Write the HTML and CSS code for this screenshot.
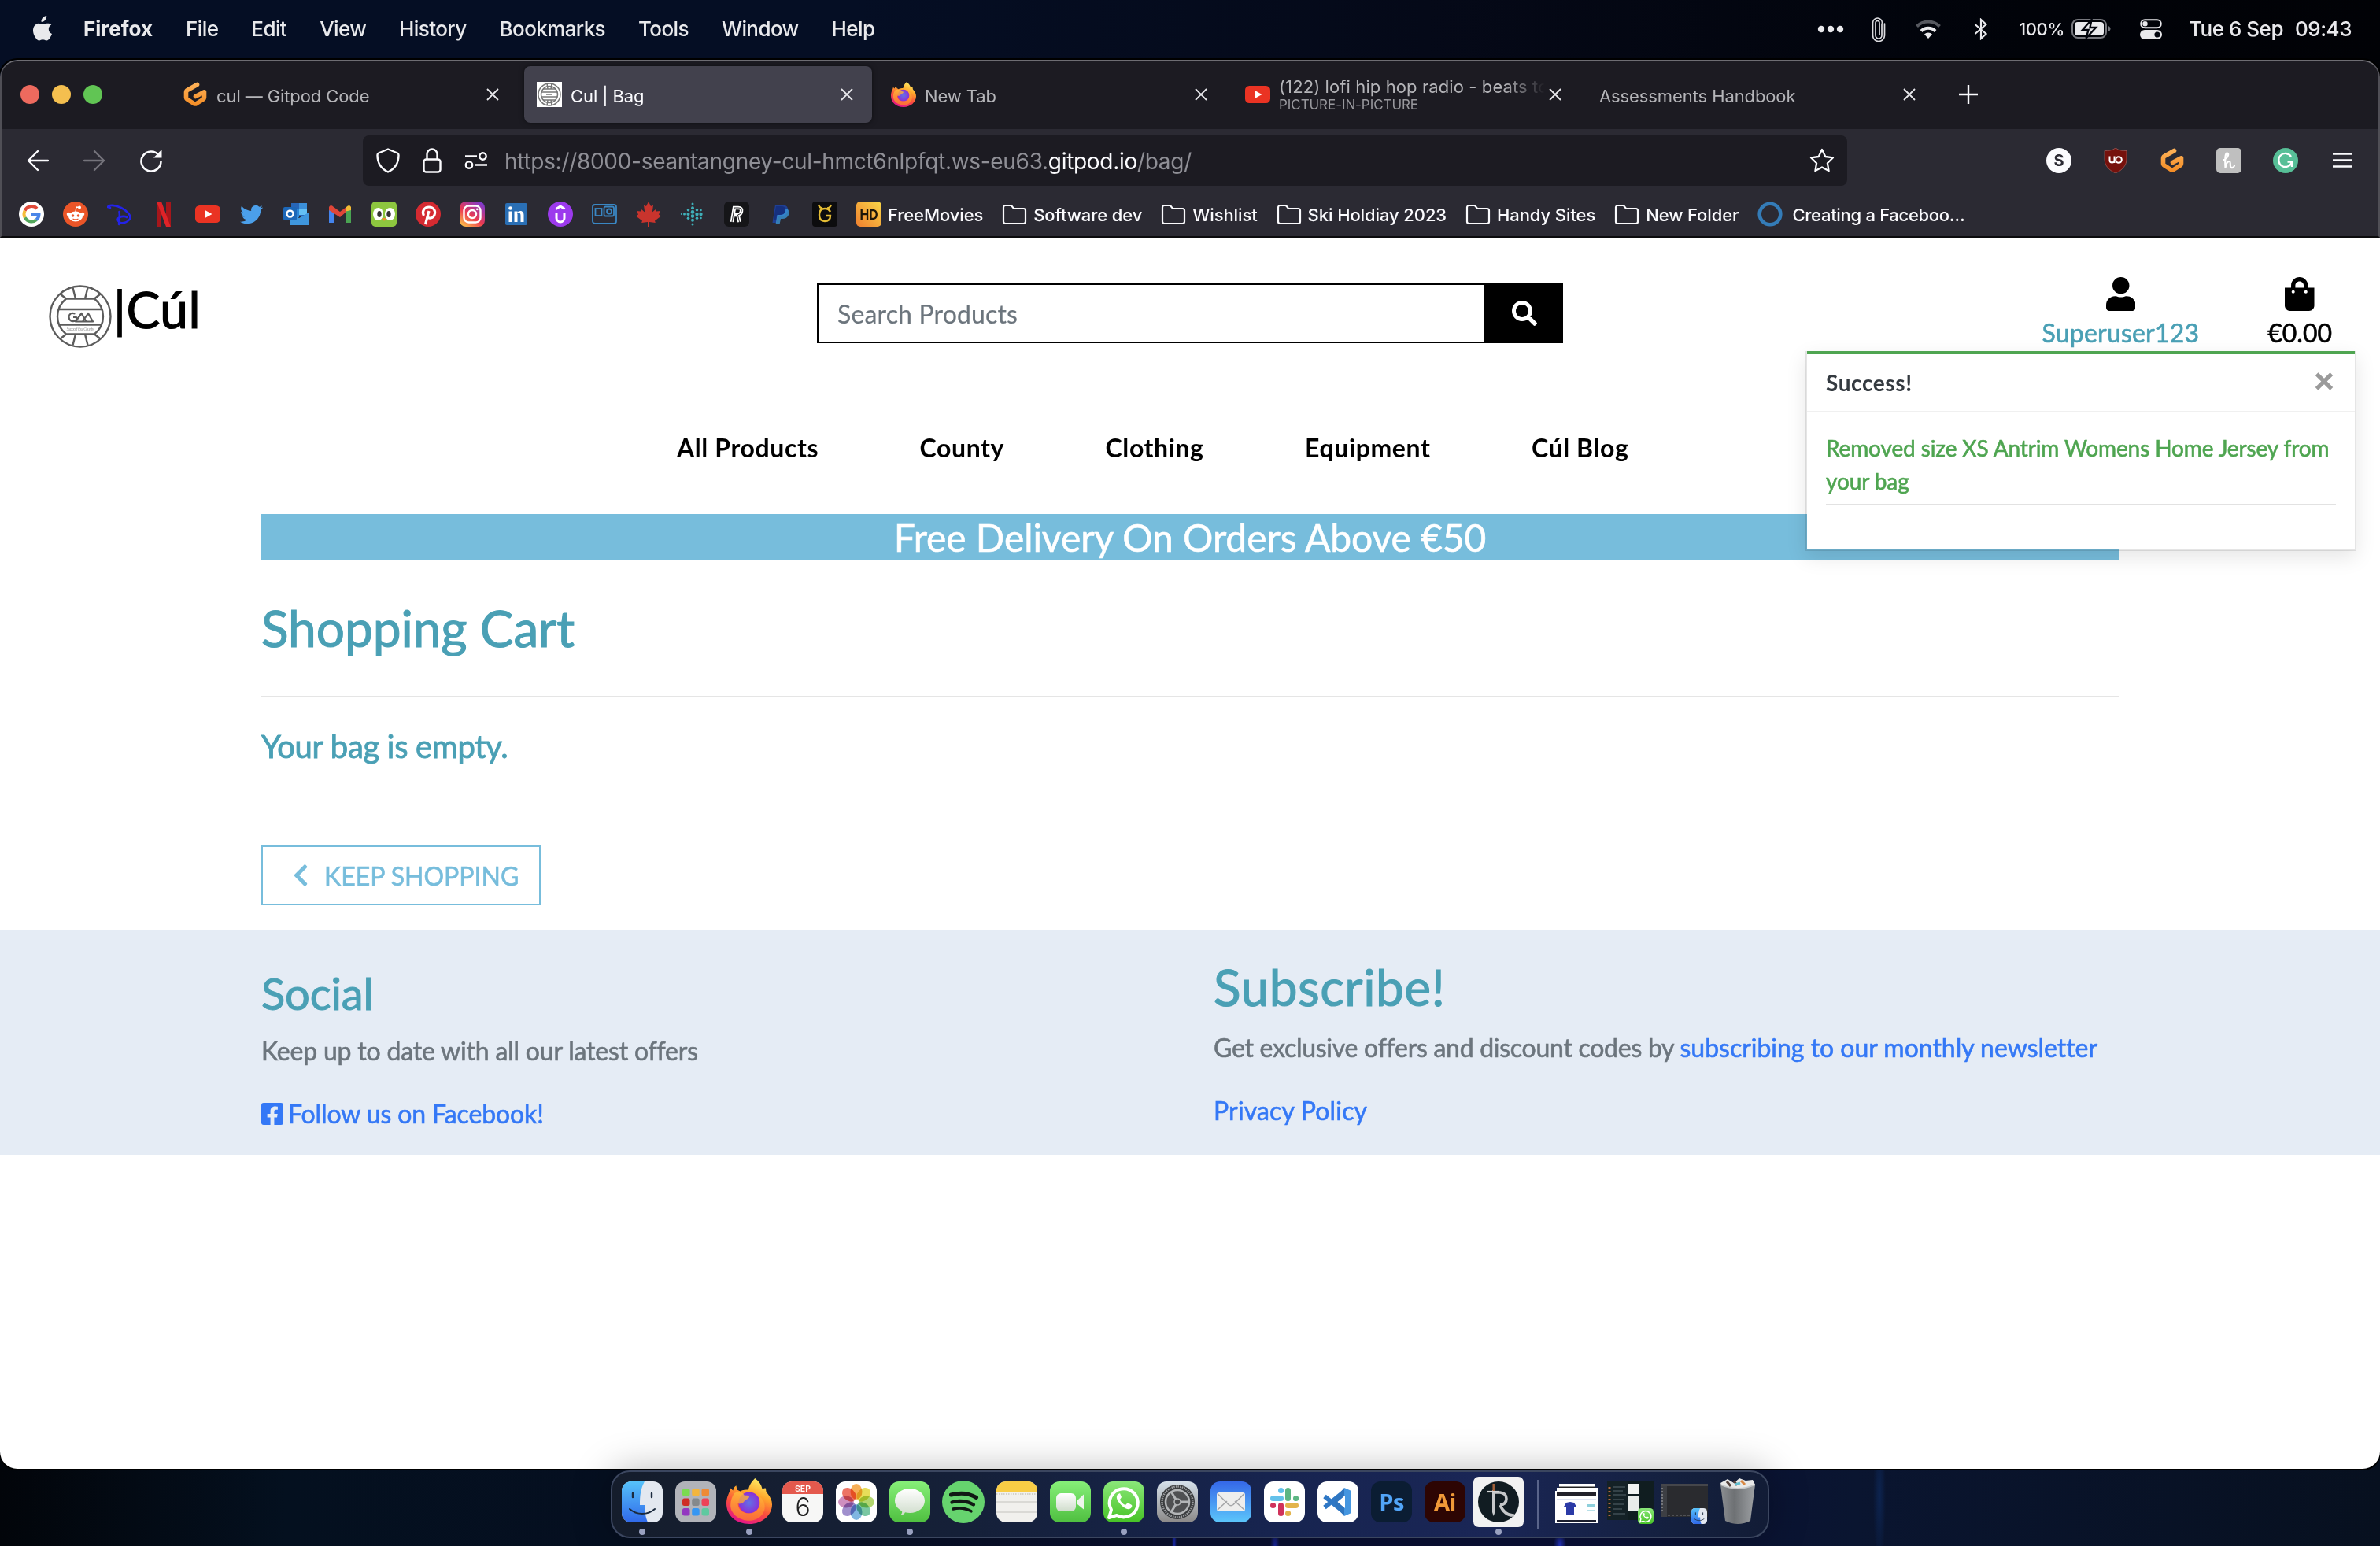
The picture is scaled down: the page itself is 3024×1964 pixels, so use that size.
FILE: index.html
```html
<!DOCTYPE html>
<html lang="en">
<head>
<meta charset="utf-8">
<title>Cul | Bag</title>
<link rel="stylesheet" href="styles.css">
</head>
<body>
<svg class="defs" width="0" height="0" aria-hidden="true">
  <defs>
    <linearGradient id="g-orange" gradientUnits="userSpaceOnUse" x1="0" y1="0" x2="0" y2="32"><stop offset="0" stop-color="#ffb45b"/><stop offset="1" stop-color="#f28a22"/></linearGradient>
    <linearGradient id="g-flame" x1=".75" y1="0" x2=".35" y2="1"><stop offset="0" stop-color="#fff36a"/><stop offset=".35" stop-color="#ffa72b"/><stop offset=".65" stop-color="#fb4d3d"/><stop offset="1" stop-color="#e2158a"/></linearGradient>
    <linearGradient id="g-fox" x1="0" y1="0" x2="0" y2="1"><stop offset="0" stop-color="#ffbd3b"/><stop offset="1" stop-color="#ff7a2d"/></linearGradient>
    <radialGradient id="g-globe"><stop offset="0" stop-color="#6173e6"/><stop offset="1" stop-color="#8b2fd6"/></radialGradient>
    <linearGradient id="g-green" x1="0" y1="0" x2="0" y2="1"><stop offset="0" stop-color="#86ef78"/><stop offset="1" stop-color="#4fbf40"/></linearGradient>
    <linearGradient id="g-wa" x1="0" y1="0" x2="0" y2="1"><stop offset="0" stop-color="#8ae779"/><stop offset="1" stop-color="#47c326"/></linearGradient>
    <linearGradient id="g-blue" x1="0" y1="0" x2="0" y2="1"><stop offset="0" stop-color="#56c2fa"/><stop offset="1" stop-color="#3069ea"/></linearGradient>
    <linearGradient id="g-mail" x1="0" y1="0" x2="0" y2="1"><stop offset="0" stop-color="#3568e8"/><stop offset="1" stop-color="#5cc6fb"/></linearGradient>
    <linearGradient id="g-paper" x1="0" y1="0" x2="0" y2="1"><stop offset="0" stop-color="#ffffff"/><stop offset="1" stop-color="#cfdccb"/></linearGradient>
    <linearGradient id="g-gear" x1="0" y1="0" x2="0" y2="1"><stop offset="0" stop-color="#d5e0ea"/><stop offset="1" stop-color="#8b8988"/></linearGradient>
    <linearGradient id="g-trash" x1="0" y1="0" x2="1" y2="0"><stop offset="0" stop-color="#8b8e92"/><stop offset=".4" stop-color="#6e7174"/><stop offset="1" stop-color="#9ea1a4"/></linearGradient>
    <linearGradient id="g-insta" x1=".1" y1="1" x2=".8" y2="0"><stop offset="0" stop-color="#fdc84a"/><stop offset=".45" stop-color="#ec3a50"/><stop offset="1" stop-color="#7d3ad0"/></linearGradient>
    <linearGradient id="g-hd" x1="0" y1="1" x2="1" y2="0"><stop offset="0" stop-color="#ef7f2f"/><stop offset="1" stop-color="#f9d748"/></linearGradient>
  </defs>
  <symbol id="i-close" viewBox="0 0 16 16"><path d="M1 1l14 14M15 1L1 15" fill="none" stroke="#e8e8ec" stroke-width="1.8"/></symbol>
  <symbol id="i-gitpod" viewBox="0 0 32 32"><path d="M18.500 3.500L6.500 10.300Q4.500 11.400 4.500 13.500V19.500Q4.500 21.300 6.200 22.300L14.300 27.500Q16 28.500 17.700 27.500L25.800 22.300Q27.500 21.300 27.500 19.500V12.800L16.500 18.500" fill="none" stroke="url(#g-orange)" stroke-width="5.600" stroke-linecap="round" stroke-linejoin="round"/></symbol>
  <symbol id="i-youtube" viewBox="0 0 32 32"><rect y="5" width="32" height="22" rx="5.500" fill="#ea3323"/><path d="M12.500 11v10l9-5z" fill="#fff"/></symbol>
  <symbol id="i-firefox" viewBox="0 0 56 56"><path d="M35 0c5 4 8 8 9 13 2-1 3-1 4-1 1 3 0 4 2 6 4 5 6 9 6 14 0 13-12 24-28 24S0 46 0 31c0-9 4-13 5-19l3 3c1-3 2-5 4-6l1 5 4 2c3-2 7-2 10-2 1-5 3-9 8-14z" fill="url(#g-flame)"/><circle cx="28" cy="30" r="13" fill="url(#g-globe)"/><path d="M10 18c5-2 10-1 12 3 3 0 6 0 6 2-1 3-5 3-6 5s-4 4-8 3c0 7 6 12 13 12 9 0 14-6 14-13 0-4-1-7-3-9 5 2 9 7 9 14 0 10-9 17-19 17S5 45 5 33c0-6 2-11 5-15z" fill="url(#g-fox)" opacity=".8"/></symbol>
  <symbol id="i-folder" viewBox="0 0 32 32"><path d="M2 7.500A2.500 2.500 0 0 1 4.500 5h6.200a2.500 2.500 0 0 1 2 .9L15 9h12.500A2.500 2.500 0 0 1 30 11.500v14a2.500 2.500 0 0 1-2.500 2.500h-23A2.500 2.500 0 0 1 2 25.500z" fill="none" stroke="#fbfbfe" stroke-width="2.200"/></symbol>
  <symbol id="i-finder" viewBox="0 0 52 52"><rect width="52" height="52" rx="12" fill="#e3e8f0"/><path d="M12 0h17c-5 9-6 18-6 30h6c0 8 1 15 4 22H12A12 12 0 0 1 0 40V12A12 12 0 0 1 12 0z" fill="url(#g-blue)"/><path d="M14 15v5M38 15v5" stroke="#1c2b3f" stroke-width="2.400" stroke-linecap="round"/><path d="M10 35c9 8 23 8 32 0" fill="none" stroke="#1c2b3f" stroke-width="2" stroke-linecap="round"/></symbol>
  <symbol id="i-whatsapp" viewBox="0 0 52 52"><rect width="52" height="52" rx="12" fill="url(#g-wa)"/><path d="M7 46l3-10a18 18 0 1 1 7 7z" fill="none" stroke="#fff" stroke-width="4" stroke-linejoin="round"/><path d="M19 16c-3 2-3 6 1 11s9 9 13 8c3-1 4-4 3-5l-5-3-3 3c-3-1-6-4-7-7l2-3-2-5z" fill="#fff"/></symbol>
</svg>

<div class="desktop">
  <header class="menubar">
    <svg class="apple" viewBox="0 0 28 34"><path d="M19.200 1c.2 2.100-.6 4-1.800 5.400-1.200 1.500-3.100 2.500-4.900 2.400-.2-2 .7-4 1.900-5.300C15.600 2.100 17.600 1.100 19.200 1zM25.300 12.200c-2.300 1.400-3.500 3.300-3.500 5.800 0 2.900 1.600 5 4.200 6.100-.7 2-1.600 3.700-2.800 5.300-1.100 1.600-2.300 3-4.200 3-1.900 0-2.400-1.100-4.600-1.100s-2.900 1.100-4.600 1.100c-1.900 0-3.200-1.500-4.400-3.200C2.300 24.900.9 19.100 3 14.900c1.300-2.500 3.700-4.200 6.200-4.200 1.900 0 3.500 1.200 5.100 1.200 1.500 0 3.400-1.400 5.900-1.200 2 .1 3.900 0 5.100 1.500z" fill="#e9e9ec"/></svg>
    <strong class="app-name">Firefox</strong>
    <nav class="menus"><span>File</span><span>Edit</span><span>View</span><span>History</span><span>Bookmarks</span><span>Tools</span><span>Window</span><span>Help</span></nav>
    <div class="status">
      <svg class="st-dots" viewBox="0 0 34 10"><g fill="#e9e9ec"><circle cx="5" cy="5" r="4.200"/><circle cx="17" cy="5" r="4.200"/><circle cx="29" cy="5" r="4.200"/></g></svg>
      <svg class="st-clip" viewBox="0 0 18 32"><path d="M13 9v15a4 4 0 0 1-8 0V8a2.500 2.500 0 0 1 5 0v15M16.500 9v15a7.500 7.500 0 0 1-15 0V8a6 6 0 0 1 12 0" fill="none" stroke="#dcdce0" stroke-width="1.700" stroke-linecap="round"/></svg>
      <svg class="st-wifi" viewBox="0 0 34 26"><path d="M2.500 9.500a20.500 20.500 0 0 1 29 0" fill="none" stroke="#56585f" stroke-width="4"/><path d="M8 15.500a12.500 12.500 0 0 1 18 0" fill="none" stroke="#e9e9ec" stroke-width="4"/><path d="M17 25l-5-5.500a7.500 7.500 0 0 1 10 0z" fill="#e9e9ec"/></svg>
      <svg class="st-bt" viewBox="0 0 18 28"><path d="M1.500 8l14 12L9 26V2l6.500 6-14 12" fill="none" stroke="#e9e9ec" stroke-width="2.200"/></svg>
      <span class="pct">100%</span>
      <svg class="st-batt" viewBox="0 0 50 26"><rect x="1" y="1" width="43" height="23" rx="7" fill="none" stroke="#77787e" stroke-width="2"/><rect x="4" y="4" width="37" height="17" rx="4" fill="#e9e9ec"/><path d="M46.500 9v7q3-1 3-3.500T46.500 9z" fill="#77787e"/><path d="M25.500 1L14 14h7.500l-3 10.500L31 11h-7.500z" fill="#e9e9ec" stroke="#02050d" stroke-width="2.400"/></svg>
      <svg class="st-cc" viewBox="0 0 28 26"><rect x="1.200" y="1.200" width="25.600" height="10" rx="5" fill="none" stroke="#e9e9ec" stroke-width="2"/><circle cx="6.500" cy="6.200" r="3.200" fill="#e9e9ec"/><rect y="14" width="28" height="12" rx="6" fill="#e9e9ec"/><circle cx="22" cy="20" r="3.600" fill="#04070f"/></svg>
      <span class="date">Tue 6 Sep</span><span class="time">09:43</span>
    </div>
  </header>

  <main class="window">
    <section class="chrome">
      <div class="tabs">
        <div class="lights"><i class="red"></i><i class="yellow"></i><i class="green"></i></div>
        <div class="tab"><svg class="fav"><use href="#i-gitpod"/></svg><span class="title">cul — Gitpod Code</span><svg class="x"><use href="#i-close"/></svg></div>
        <div class="tab active"><svg class="fav" viewBox="0 0 32 32"><rect width="32" height="32" fill="#fff"/><g fill="none" stroke="#777" stroke-width="1.500"><circle cx="16" cy="16" r="14"/><circle cx="16" cy="16" r="10.500"/><path d="M8 9h16M5.500 13h21M5.500 19h21M8 23h16M13 2l1 7M19 2l-1 7M13 30l1-7M19 30l-1-7M12 16h8"/></g></svg><span class="title">Cul | Bag</span><svg class="x"><use href="#i-close"/></svg></div>
        <div class="tab"><svg class="fav"><use href="#i-firefox"/></svg><span class="title">New Tab</span><svg class="x"><use href="#i-close"/></svg></div>
        <div class="tab media"><svg class="fav"><use href="#i-youtube"/></svg><span class="title"><span class="fade">(122) lofi hip hop radio - beats to</span><small>PICTURE-IN-PICTURE</small></span><svg class="x"><use href="#i-close"/></svg></div>
        <div class="tab"><span class="title">Assessments Handbook</span><svg class="x"><use href="#i-close"/></svg></div>
        <svg class="plus" viewBox="0 0 24 24"><path d="M12 0v24M0 12h24" stroke="#fbfbfe" stroke-width="2.400"/></svg>
      </div>

      <div class="toolbar">
        <svg class="t-back" viewBox="0 0 28 28"><path d="M27 14H2M14 2L2 14l12 12" fill="none" stroke="#fbfbfe" stroke-width="2.400" stroke-linecap="round" stroke-linejoin="round"/></svg>
        <svg class="t-fwd" viewBox="0 0 28 28"><path d="M1 14h25M14 2l12 12-12 12" fill="none" stroke="#74737b" stroke-width="2.400" stroke-linecap="round" stroke-linejoin="round"/></svg>
        <svg class="t-reload" viewBox="0 0 28 28"><path d="M24 7.500A12.500 12.500 0 1 0 26.500 15" fill="none" stroke="#fbfbfe" stroke-width="2.600" stroke-linecap="round"/><path d="M27.500 0v10.500H17z" fill="#fbfbfe"/></svg>
        <div class="urlbar">
          <svg class="u-shield" viewBox="0 0 30 32"><path d="M15 1.500l12 5q1.500.7 1.500 2.500c0 9-4 17-13.500 21.500C5.500 26 1.500 18 1.500 9q0-1.800 1.500-2.500z" fill="none" stroke="#fbfbfe" stroke-width="2.400" stroke-linejoin="round"/></svg>
          <svg class="u-lock" viewBox="0 0 26 32"><rect x="2.500" y="14.500" width="21" height="16" rx="3" fill="none" stroke="#fbfbfe" stroke-width="2.400"/><path d="M6.500 14V8a6.500 6.500 0 0 1 13 0v6" fill="none" stroke="#fbfbfe" stroke-width="2.400"/></svg>
          <svg class="u-perm" viewBox="0 0 30 22"><g fill="none" stroke="#fbfbfe" stroke-width="2.400"><circle cx="23.500" cy="5.500" r="4.200"/><circle cx="6" cy="16.500" r="4.200"/><path d="M1 5.500h15M13 16.500h16"/></g></svg>
          <span class="url">https://8000-seantangney-cul-hmct6nlpfqt.ws-eu63.<b>gitpod.io</b>/bag/</span>
          <svg class="u-star" viewBox="0 0 32 32"><path d="M16 2l4.300 9 9.700 1.300-7.100 6.900 1.700 9.900L16 24.400l-8.600 4.700 1.700-9.900L2 12.300 11.700 11z" fill="none" stroke="#fbfbfe" stroke-width="2.300" stroke-linejoin="round"/></svg>
        </div>
        <div class="extensions">
          <svg viewBox="0 0 32 32"><circle cx="16" cy="16" r="16" fill="#fbfbfe"/><text x="16" y="23" text-anchor="middle" class="ic-s">S</text></svg>
          <svg viewBox="0 0 32 32"><path d="M16 0c4 3 9 4 14 3.500V14c0 8-5 14-14 18C7 28 2 22 2 14V3.500C7 4 12 3 16 0z" fill="#76110c" stroke="#9d5a57" stroke-width=".8"/><path d="M8.500 10.500V15.500a3 3 0 0 0 6 0V10.500M14.500 16v3" fill="none" stroke="#fff" stroke-width="2"/><circle cx="20" cy="15" r="3.800" fill="none" stroke="#fff" stroke-width="2"/></svg>
          <svg><use href="#i-gitpod"/></svg>
          <svg viewBox="0 0 32 32"><rect width="32" height="32" rx="5" fill="#bfbfbf"/><path d="M9 15c5-1 8-8 5-8.500S11 15 11.500 25c1-5 3-8 5-8s1 4 1.500 6.500 4 2 5-1" fill="none" stroke="#fff" stroke-width="2.200" stroke-linecap="round"/></svg>
          <svg viewBox="0 0 32 32"><circle cx="16" cy="16" r="16" fill="#57bf97"/><path d="M23 11a8.500 8.500 0 1 0 1 6.500h-5.500M24 17.500V24" fill="none" stroke="#fff" stroke-width="2.300"/></svg>
          <svg viewBox="0 0 32 32"><path d="M4 7.500h24M4 15.500h24M4 23.500h24" stroke="#fbfbfe" stroke-width="2.400"/></svg>
        </div>
      </div>

      <div class="bookmarks">
        <svg viewBox="0 0 32 32"><circle cx="16" cy="16" r="16" fill="#fff"/><g fill="none" stroke-width="4"><path d="M23 9a9.500 9.500 0 0 0-15.400 2.600" stroke="#e04a3a"/><path d="M7.600 11.600a9.500 9.500 0 0 0 0 8.800" stroke="#f5bd3a"/><path d="M7.600 20.400A9.500 9.500 0 0 0 22.200 23.300" stroke="#53a75d"/><path d="M16 16.200h9.500q0 4.300-3.300 7.100" stroke="#4a86e8"/></g></svg>
        <svg viewBox="0 0 32 32"><circle cx="16" cy="16" r="16" fill="#eb5528"/><ellipse cx="16" cy="19" rx="9" ry="6.500" fill="#fff"/><circle cx="7" cy="16" r="2.300" fill="#fff"/><circle cx="25" cy="16" r="2.300" fill="#fff"/><circle cx="21" cy="7.500" r="2" fill="#fff"/><path d="M16 13l1-6 4 .5" fill="none" stroke="#fff" stroke-width="1.300"/><circle cx="12.500" cy="18" r="1.800" fill="#eb5528"/><circle cx="19.500" cy="18" r="1.800" fill="#eb5528"/><path d="M12.500 22q3.500 2 7 0" fill="none" stroke="#eb5528" stroke-width="1.300"/></svg>
        <svg viewBox="0 0 32 32"><path d="M1 7C2 4 10 4 18 8S31 18 29 22s-8 6-12 5c-4-2-5-5-1-7s8-1 9 0M15.500 13c1 6 0 11-.5 16M1 7l3 1" fill="none" stroke="#2323e8" stroke-width="2.600" stroke-linecap="round"/></svg>
        <svg viewBox="0 0 32 32"><path d="M7 0h6v32q-3 0-6 .5zM19 0h6v32.500q-3-.5-6-.5z" fill="#a6161b"/><path d="M7 0h6l12 32.500q-3-.5-6-.5z" fill="#df2328"/></svg>
        <svg><use href="#i-youtube"/></svg>
        <svg viewBox="0 0 32 32"><path d="M30 7.500c-1 .5-2.200.8-3.400 1 1.200-.8 2.100-1.900 2.600-3.300-1.100.7-2.400 1.200-3.800 1.500A6 6 0 0 0 15.200 12C10.200 11.700 5.800 9.300 3 5.800 1.400 8.500 2.200 12 4.800 13.800c-1 0-1.900-.3-2.700-.7 0 2.900 2 5.300 4.800 5.900-.9.200-1.800.3-2.700.1.700 2.400 2.900 4.100 5.600 4.100A12 12 0 0 1 1 25.800c11 6.500 23.800.2 26-12V11c1.100-.9 2.300-2.100 3-3.500z" fill="#4b9fea"/></svg>
        <svg viewBox="0 0 32 32"><rect x="10" y="2" width="20" height="16" fill="#2766b8"/><path d="M10 10h10v10H10z" fill="#2a86d8"/><path d="M20 2h10v8H20z" fill="#3b8fd9"/><path d="M20 10h10v7H20z" fill="#64c0f5"/><path d="M9 14l11 7 12-7v16H9z" fill="#3f96dd"/><rect x="0" y="7" width="17" height="17" rx="2" fill="#1c67b8"/><circle cx="8.500" cy="15.500" r="4" fill="none" stroke="#fff" stroke-width="2.400"/></svg>
        <svg viewBox="0 0 32 32"><path d="M2 27V8l6 4.500V27z" fill="#4484ee"/><path d="M30 27V8l-6 4.500V27z" fill="#4aa352"/><path d="M24 12.500V7q4-4 6 0v4z" fill="#f3bc35"/><path d="M2 11V7q2-4 6 0l8 6 8-6v6l-8 7z" fill="#df4638"/></svg>
        <svg viewBox="0 0 32 32"><rect width="32" height="32" rx="5" fill="#8dc63f"/><ellipse cx="8.500" cy="16" rx="6.500" ry="8" fill="#fff"/><ellipse cx="23.500" cy="16" rx="6.500" ry="8" fill="#fff"/><ellipse cx="10" cy="16" rx="2.700" ry="4" fill="#333"/><ellipse cx="22" cy="16" rx="2.700" ry="4" fill="#333"/><path d="M13 21h6l-3 4z" fill="#f2912e"/></svg>
        <svg viewBox="0 0 32 32"><circle cx="16" cy="16" r="16" fill="#d52a31"/><path d="M10.500 18c-3-5 .5-11 6.500-11s9 5 7 10-8 5-9 2M17 12l-4.500 17" fill="none" stroke="#fff" stroke-width="3.200"/></svg>
        <svg viewBox="0 0 32 32"><rect width="32" height="32" rx="8" fill="url(#g-insta)"/><g fill="none" stroke="#fff" stroke-width="2.400"><rect x="5.500" y="5.500" width="21" height="21" rx="6"/><circle cx="16" cy="16" r="5"/></g><circle cx="22.300" cy="9.800" r="1.400" fill="#fff"/></svg>
        <svg viewBox="0 0 32 32"><rect x="2" y="2" width="28" height="28" rx="2" fill="#2a6fb5"/><path d="M6.500 12.500h4V26h-4zM13.500 12.500h4V26h-4zM17 16c3-3 4.500-1 4.500 2v8h4v-9c0-6-6-6-8.500-3z" fill="#fff"/><circle cx="8.500" cy="8.500" r="2.300" fill="#fff"/></svg>
        <svg viewBox="0 0 32 32"><circle cx="16" cy="16" r="16" fill="#9c3aed"/><path d="M11 14v7a5 5 0 0 0 10 0v-7M10.500 9.500L16 6l5.500 3.500" fill="none" stroke="#fff" stroke-width="3"/></svg>
        <svg viewBox="0 0 32 32"><g fill="none" stroke="#3a87c4" stroke-width="1.800"><rect x="1" y="4" width="30" height="24" rx="3"/><rect x="4.500" y="9" width="8" height="9"/><rect x="15.500" y="6.500" width="12.500" height="12" rx="2"/><circle cx="22" cy="12.500" r="3"/></g></svg>
        <svg viewBox="0 0 32 32"><path d="M16 0l3 6 3-1.500-1.200 9L25 10l1 2.500 5-.5-2 4.500 3 2-8 6 .8 2.500-7.800-1V32h-2v-6l-7.800 1L8 24.500l-8-6 3-2L1 12l5 .5L7 10l4.200 3.500L10 4.500 13 6z" fill="#c9342d"/></svg>
        <svg viewBox="0 0 32 32"><g fill="#3fb0b9"><circle cx="16" cy="3" r="1.500"/><circle cx="16" cy="8.200" r="2"/><circle cx="16" cy="13.400" r="2.300"/><circle cx="16" cy="18.600" r="2.300"/><circle cx="16" cy="23.800" r="2"/><circle cx="16" cy="29" r="1.500"/><circle cx="10.500" cy="10.800" r="1.800"/><circle cx="10.500" cy="16" r="2"/><circle cx="10.500" cy="21.200" r="1.800"/><circle cx="21.500" cy="10.800" r="1.800"/><circle cx="21.500" cy="16" r="2.200"/><circle cx="21.500" cy="21.200" r="1.800"/><circle cx="5.500" cy="16" r="1.500"/><circle cx="26.500" cy="16" r="2.200"/><circle cx="26.500" cy="11" r="1.300"/><circle cx="26.500" cy="21" r="1.300"/><circle cx="1.800" cy="16" r="1"/></g></svg>
        <svg viewBox="0 0 32 32"><rect width="32" height="32" rx="6" fill="#151518"/><path d="M10 26l3-18h5q5 0 4 4.500-.5 4-4.500 4.500l2 9M12 17h6" fill="none" stroke="#fff" stroke-width="4.500"/><path d="M10 26l3-18h5q5 0 4 4.500-.5 4-4.500 4.500l2 9" fill="none" stroke="#151518" stroke-width=".9"/></svg>
        <svg viewBox="0 0 32 32"><path d="M9 4h10q7 1 6 8-2 7-9 7h-4l-1.500 8H5.500z" fill="#1f3f93"/><path d="M13 9h11q4 3 2 8-2 5-8 5h-2l-1.500 7H9.500z" fill="#3b9be0" opacity=".75"/><path d="M10 6h8q5 1 4 6-1 5-7 5h-4l-1 6H7z" fill="#16307e"/></svg>
        <svg viewBox="0 0 32 32"><rect width="32" height="32" rx="4" fill="#0c0c0e"/><path d="M23 13q-2-4-7-4-7 0-7 8t7 8q7 0 7-7h-6M8 4q1 4 5 4.500M24 4q-1 4-5 4.500" fill="none" stroke="#e5bd35" stroke-width="2.400"/></svg>
        <div class="bm"><svg viewBox="0 0 32 32"><rect width="32" height="32" rx="5" fill="url(#g-hd)"/><text x="16" y="23" text-anchor="middle" class="ic-hd" textLength="23" lengthAdjust="spacingAndGlyphs">HD</text></svg><span>FreeMovies</span></div>
        <div class="bm"><svg><use href="#i-folder"/></svg><span>Software dev</span></div>
        <div class="bm"><svg><use href="#i-folder"/></svg><span>Wishlist</span></div>
        <div class="bm"><svg><use href="#i-folder"/></svg><span>Ski Holdiay 2023</span></div>
        <div class="bm"><svg><use href="#i-folder"/></svg><span>Handy Sites</span></div>
        <div class="bm"><svg><use href="#i-folder"/></svg><span>New Folder</span></div>
        <div class="bm last"><svg viewBox="0 0 32 32"><circle cx="16" cy="16" r="13.300" fill="none" stroke="#347cb8" stroke-width="4.600"/></svg><span>Creating a Faceboo…</span></div>
      </div>
    </section>

    <section class="site">
      <div class="topbar">
        <a class="logo">
          <svg viewBox="0 0 80 80"><g fill="none" stroke="#5c5c5c" stroke-width="2.400"><circle cx="40" cy="40" r="38.500"/><path d="M22 17.500h36M22 62.500h36M22 17.500C14 24 11 32 11 40s3 16 11 22.500M58 17.500C66 24 69 32 69 40s-3 16-11 22.500M13 31h54M13 50.500h54M22 17.500L14.500 11.500M58 17.500l7.500-6M22 62.500l-7.500 6M58 62.500l7.500 6M34 17.500L30.500 3.500M46 17.500L49.500 3.500M34 62.500L30.500 76.500M46 62.500l3.500 14"/></g><path d="M33.500 36.500q-7-2.500-8 4 .5 6.500 7 5.500l2.500-1v-4h-4M34 46.500l7.500-10.500 6 10.500zM43 46.500l7-10.500 6 10.500z" fill="none" stroke="#5c5c5c" stroke-width="2.200" stroke-linejoin="round"/><text x="40" y="57.500" text-anchor="middle" class="ic-motto" textLength="35">Support Your County</text></svg>
          <span>|Cúl</span>
        </a>
        <form class="search"><span class="field">Search Products</span><span class="go"><svg viewBox="0 0 512 512"><path d="M505 442.700L405.300 343c-4.500-4.500-10.600-7-17-7H372c27.600-35.300 44-79.700 44-128C416 93.100 322.900 0 208 0S0 93.100 0 208s93.100 208 208 208c48.300 0 92.700-16.400 128-44v16.300c0 6.400 2.500 12.500 7 17l99.700 99.700c9.400 9.400 24.600 9.400 33.900 0l28.300-28.300c9.400-9.400 9.400-24.600.1-34zM208 336c-70.700 0-128-57.200-128-128 0-70.700 57.200-128 128-128 70.700 0 128 57.200 128 128 0 70.700-57.200 128-128 128z" fill="#fff"/></svg></span></form>
        <div class="account">
          <a class="user"><svg viewBox="0 0 448 512"><path d="M224 256c70.700 0 128-57.300 128-128S294.700 0 224 0 96 57.300 96 128s57.300 128 128 128zm89.600 32h-16.700c-22.200 10.200-46.900 16-72.900 16s-50.600-5.800-72.900-16h-16.700C60.200 288 0 348.200 0 422.400V464c0 26.500 21.500 48 48 48h352c26.500 0 48-21.500 48-48v-41.600c0-74.200-60.200-134.400-134.400-134.400z"/></svg><span>Superuser123</span></a>
          <a class="bag"><svg viewBox="0 0 448 512"><path d="M352 160v-32C352 57.420 294.579 0 224 0 153.420 0 96 57.420 96 128v32H0v272c0 44.183 35.817 80 80 80h288c44.183 0 80-35.817 80-80V160h-96zm-192-32c0-35.290 28.710-64 64-64s64 28.710 64 64v32H160v-32zm160 120c-13.255 0-24-10.745-24-24s10.745-24 24-24 24 10.745 24 24-10.745 24-24 24zm-192 0c-13.255 0-24-10.745-24-24s10.745-24 24-24 24 10.745 24 24-10.745 24-24 24z"/></svg><span>€0.00</span></a>
        </div>
      </div>
      <nav class="main-nav"><a>All Products</a><a>County</a><a>Clothing</a><a>Equipment</a><a>Cúl Blog</a></nav>
      <div class="container">
        <div class="banner">Free Delivery On Orders Above €50</div>
        <h2>Shopping Cart</h2>
        <hr>
        <p class="empty">Your bag is empty.</p>
        <a class="btn"><svg viewBox="0 0 320 512"><path d="M34.520 239.030L228.870 44.690c9.370-9.370 24.570-9.370 33.940 0l22.670 22.670c9.360 9.360 9.370 24.520.04 33.900L131.490 256l154.020 154.750c9.340 9.380 9.320 24.540-.04 33.900l-22.670 22.670c-9.370 9.370-24.570 9.370-33.940 0L34.520 272.970c-9.370-9.370-9.370-24.570 0-33.940z" fill="#77bddc"/></svg><span>KEEP SHOPPING</span></a>
      </div>
      <footer class="footer">
        <div class="social">
          <h3>Social</h3>
          <p class="keep">Keep up to date with all our latest offers</p>
          <a class="fb"><svg viewBox="0 0 448 512"><path d="M400 32H48A48 48 0 0 0 0 80v352a48 48 0 0 0 48 48h137.250V327.690h-63V256h63v-54.640c0-62.150 37-96.480 93.670-96.480 27.140 0 55.520 4.840 55.520 4.840v61h-31.270c-30.810 0-40.420 19.120-40.420 38.730V256h68.780l-11 71.690h-57.780V480H400a48 48 0 0 0 48-48V80a48 48 0 0 0-48-48z" fill="#3478f6"/></svg><span>Follow us on Facebook!</span></a>
        </div>
        <div class="subscribe">
          <h2>Subscribe!</h2>
          <p><span class="lead">Get exclusive offers and discount codes by </span><a>subscribing to our monthly newsletter</a></p>
          <p><a class="privacy">Privacy Policy</a></p>
        </div>
      </footer>
      <aside class="toast">
        <div class="toast-head"><strong>Success!</strong><svg viewBox="0 0 24 22"><path d="M3 2l18 18M21 2L3 20" stroke="#9a9a9a" stroke-width="5"/></svg></div>
        <div class="toast-body"><p>Removed size XS Antrim Womens Home Jersey from your bag</p><hr></div>
      </aside>
    </section>
  </main>

  <div class="dock">
    <div class="cell on"><svg><use href="#i-finder"/></svg></div>
    <div class="cell"><svg viewBox="0 0 52 52"><rect width="52" height="52" rx="12" fill="#b1b3b9"/><rect x="9" y="9" width="9.500" height="9.500" rx="2.500" fill="#7bdc50"/><rect x="21.200" y="9" width="9.500" height="9.500" rx="2.500" fill="#f3b53d"/><rect x="33.500" y="9" width="9.500" height="9.500" rx="2.500" fill="#ee8a35"/><rect x="9" y="21.500" width="9.500" height="9.500" rx="2.500" fill="#cf2c25"/><rect x="21.200" y="21.500" width="9.500" height="9.500" rx="2.500" fill="#84898c"/><rect x="33.500" y="21.500" width="9.500" height="9.500" rx="2.500" fill="#ee4258"/><rect x="9" y="34" width="9.500" height="9.500" rx="2.500" fill="#9337c0"/><rect x="21.200" y="34" width="9.500" height="9.500" rx="2.500" fill="#3596f2"/><rect x="33.500" y="34" width="9.500" height="9.500" rx="2.500" fill="#5fc9a0"/></svg></div>
    <div class="cell on"><svg class="ff"><use href="#i-firefox"/></svg></div>
    <div class="cell"><svg viewBox="0 0 52 52"><rect width="52" height="52" rx="12" fill="#f7f7f6"/><path d="M12 0h28a12 12 0 0 1 12 12v4H0v-4A12 12 0 0 1 12 0z" fill="#e4594d"/><text x="26" y="12.500" text-anchor="middle" class="cal-m">SEP</text><text x="26" y="43.500" text-anchor="middle" class="cal-d">6</text></svg></div>
    <div class="cell"><svg viewBox="0 0 52 52"><rect width="52" height="52" rx="12" fill="#fff"/><g transform="translate(26 26)" class="petals"><ellipse cy="-13" rx="7.500" ry="10" fill="#f5a13a"/><ellipse cy="-13" rx="7.500" ry="10" fill="#e3d93c" transform="rotate(45)"/><ellipse cy="-13" rx="7.500" ry="10" fill="#a5cf56" transform="rotate(90)"/><ellipse cy="-13" rx="7.500" ry="10" fill="#62bd92" transform="rotate(135)"/><ellipse cy="-13" rx="7.500" ry="10" fill="#69a9dc" transform="rotate(180)"/><ellipse cy="-13" rx="7.500" ry="10" fill="#8f7cc4" transform="rotate(225)"/><ellipse cy="-13" rx="7.500" ry="10" fill="#c67bb4" transform="rotate(270)"/><ellipse cy="-13" rx="7.500" ry="10" fill="#ea5a48" transform="rotate(315)"/></g></svg></div>
    <div class="cell on"><svg viewBox="0 0 52 52"><rect width="52" height="52" rx="12" fill="url(#g-green)"/><path d="M26 9c11 0 19 7 19 15.500S37 40 26 40c-2 0-4-.2-6-.8-1 2-3 3.500-6 3.800 2-2 2.500-3.500 2-5.500-5.500-2.700-9-7.500-9-13C7 16 15 9 26 9z" fill="url(#g-paper)"/></svg></div>
    <div class="cell"><svg class="sp" viewBox="0 0 54 54"><circle cx="27" cy="27" r="27" fill="#66d36e"/><g fill="none" stroke="#111814" stroke-linecap="round"><path d="M11.500 18c11-3 23-2 32 3.500" stroke-width="5"/><path d="M12.500 27.500c9-3 20-1.500 27.500 3" stroke-width="4.300"/><path d="M14 36c8-2 16-1 23 2.800" stroke-width="3.500"/></g></svg></div>
    <div class="cell"><svg viewBox="0 0 52 52"><rect width="52" height="52" rx="12" fill="#f1f0ed"/><path d="M12 0h28a12 12 0 0 1 12 12v2H0v-2A12 12 0 0 1 12 0z" fill="#f9cd45"/><path d="M0 16h52" stroke="#b5b2aa" stroke-width="1.200" stroke-dasharray="1.500 1.500"/><path d="M0 26h52M0 39h52" stroke="#d2d1cd" stroke-width="1.500"/></svg></div>
    <div class="cell"><svg viewBox="0 0 52 52"><rect width="52" height="52" rx="12" fill="url(#g-green)"/><rect x="8" y="15" width="25" height="23" rx="6" fill="url(#g-paper)"/><path d="M35 24l8-7.500v19L35 29z" fill="#eef5ec"/></svg></div>
    <div class="cell on"><svg><use href="#i-whatsapp"/></svg></div>
    <div class="cell"><svg viewBox="0 0 52 52"><rect width="52" height="52" rx="12" fill="url(#g-gear)"/><circle cx="26" cy="26" r="22" fill="#3a3c3e"/><circle cx="26" cy="26" r="19.500" fill="none" stroke="#9b9da0" stroke-width="2.500" stroke-dasharray="1.500 1.200"/><circle cx="26" cy="26" r="15" fill="#4f5052" stroke="#b3b5b7" stroke-width="2.600"/><path d="M26 26L18 13M26 26h15M26 26l-8 13" stroke="#b3b5b7" stroke-width="3"/><circle cx="26" cy="26" r="4" fill="#4a4b4d" stroke="#b3b5b7" stroke-width="1.600"/></svg></div>
    <div class="cell"><svg viewBox="0 0 52 52"><rect width="52" height="52" rx="12" fill="url(#g-mail)"/><rect x="8" y="14" width="36" height="24" rx="3" fill="#eeeeed"/><path d="M9 36l12-11M43 36L31 25M9 15.500l14 14q3 2.500 6 0l14-14" fill="none" stroke="#a5a6a8" stroke-width="1.600"/></svg></div>
    <div class="cell"><svg viewBox="0 0 52 52"><rect width="52" height="52" rx="12" fill="#fff"/><g fill="none" stroke-width="7" stroke-linecap="round"><path d="M21.500 11.500h.1M11.500 21.500h10" stroke="#63c1ea"/><path d="M30.500 11.500v10M40.500 21.500h.1" stroke="#5cb683"/><path d="M11.500 30.500h.1M21.500 30.500v10" stroke="#d0325b"/><path d="M30.500 30.500h10M30.500 40.500h.1" stroke="#e3b44c"/></g></svg></div>
    <div class="cell"><svg viewBox="0 0 52 52"><rect width="52" height="52" rx="12" fill="#fff"/><path d="M9 19l26 21M9 33l26-21" stroke="#2e77c5" stroke-width="5.500"/><path d="M34 8l9 4v28l-9 4z" fill="#4596e0"/><path d="M34 8v11l-8 7 8 7v11L22 30v-8z" fill="#2f75bf"/><path d="M35 18v16l-9.500-8z" fill="#fff"/></svg></div>
    <div class="cell"><svg viewBox="0 0 52 52"><rect width="52" height="52" rx="12" fill="#0b1d33"/><text x="26" y="36.500" text-anchor="middle" class="adobe ps">Ps</text></svg></div>
    <div class="cell"><svg viewBox="0 0 52 52"><rect width="52" height="52" rx="12" fill="#2d0503"/><text x="26" y="36.500" text-anchor="middle" class="adobe ai">Ai</text></svg></div>
    <div class="cell on"><svg class="big" viewBox="0 0 64 64"><rect width="64" height="64" rx="7" fill="#f2f2f2"/><circle cx="32" cy="32" r="26" fill="#111c22"/><path d="M26 20h8q8 1 8 8t-8 8M34 36q6 14 18 13" fill="none" stroke="#c5c7c9" stroke-width="3.600"/><path d="M27.500 17v28l-1.800 5-1.700-5V17z" fill="#c7c9cb"/><path d="M18 19h15" stroke="#d5d6d7" stroke-width="2.200"/><path d="M25.700 9v9" stroke="#a5633b" stroke-width="2.500"/></svg></div>
    <div class="divider"></div>
    <div class="cell"><svg class="thumb" viewBox="0 0 60 60"><path d="M7 7h46v4H7zM4 12h52v4H4z" fill="#fff"/><path d="M7 10.500h46v1.500H7z" fill="#222"/><rect x="2" y="16" width="54" height="41" fill="#fff"/><rect x="4" y="18" width="50" height="5" fill="#22212a"/><rect x="4" y="26" width="50" height="2" fill="#dfe3f2"/><path d="M16 31l5-1 5 1 3 5-3 1v9H16v-9l-3-1z" fill="#2b3aa6"/><rect x="42" y="33" width="10" height="3" fill="#8fd0dc"/><rect x="42" y="40" width="10" height="2" fill="#b7e0e8"/><rect x="4" y="53" width="50" height="2" fill="#1c1f2e"/></svg></div>
    <div class="cell"><svg class="thumb" viewBox="0 0 60 60"><rect y="3" width="60" height="50" fill="#101d20"/><rect y="3" width="26" height="50" fill="#142126"/><path d="M3 11v40" stroke="#b2683d" stroke-width="3" stroke-dasharray="2 3"/><path d="M7 11h16M7 16h13M7 21h17M7 27h14M7 33h15M7 39h12M7 45h16" stroke="#55656b" stroke-width="1"/><rect x="27" y="7" width="14" height="13" fill="#f1f3f1"/><rect x="27" y="22" width="14" height="20" fill="#e9ecea"/><use href="#i-whatsapp" x="39" y="38" width="20" height="20"/></svg></div>
    <div class="cell"><svg class="thumb" viewBox="0 0 60 60"><rect y="7" width="60" height="42" fill="#2a2b2f"/><rect y="7" width="60" height="3" fill="#45464b"/><rect y="10" width="8" height="39" fill="#3d3f44"/><path d="M2 12v30" stroke="#74767c" stroke-width="2" stroke-dasharray="2 2"/><path d="M9 47h30" stroke="#77787c" stroke-width="1" stroke-dasharray="3 2"/><use href="#i-finder" x="39" y="38" width="20" height="20"/></svg></div>
    <div class="cell"><svg class="trash" viewBox="0 0 46 60"><path d="M1 6L10 1l8 5 7-6 8 3 9-1 3 6-4 8H5z" fill="#e9e9e8"/><path d="M9 4l5 6M18 3l4 6" stroke="#55433c" stroke-width="3"/><path d="M27 3l5 5" stroke="#d98742" stroke-width="3"/><path d="M20 8l6-2" stroke="#62bfd0" stroke-width="3"/><path d="M1 8q22 10 44 0l-6 46q-16 8-32 0z" fill="url(#g-trash)"/><path d="M1 8q22 10 44 0" fill="none" stroke="#c5c7c9" stroke-width="1.500"/></svg></div>
  </div>
</div>
</body>
</html>
```
FILE: styles.css
```css
* { box-sizing: border-box; }
body { margin: 0; background: #03060f; font-family: Inter, "Liberation Sans", sans-serif; }
svg { display: block; flex: none; }
h2, h3, p, hr { margin: 0; }
.defs { position: absolute; }

.desktop {
  position: relative;
  display: flex;
  flex-direction: column;
  width: 3024px;
  height: 1964px;
  overflow: hidden;
  background:
    radial-gradient(3px 40px at 1492px 1964px, #1b2cc0, transparent),
    radial-gradient(6px 20px at 1620px 1964px, #1a27a5, transparent),
    radial-gradient(8px 14px at 1982px 1962px, #2636c8, transparent),
    radial-gradient(8px 90px at 2388px 1900px, #0d2450, transparent),
    linear-gradient(90deg, #050e24 0, #050e24 36%, #050918 60%, #010309 85%, #010206 100%) 0 0 / 100% 100px no-repeat,
    linear-gradient(90deg, #02050a 0, #04101f 12%, #050f20 26%, #0a1030 50%, #0a1038 66%, #0a1530 78%, #07101f 100%);
}

/* System menu bar */
.menubar {
  display: flex;
  align-items: center;
  height: 76px;
  padding: 0 36px 2px 40px;
  color: #e9e9ec;
  font-size: 26px;
  font-weight: 500;
  line-height: 32px;
  white-space: nowrap;
}
.apple { width: 28px; height: 34px; margin-top: -3px; }
.app-name { margin-left: 38px; font-weight: 700; }
.menus { display: flex; gap: 42px; margin-left: 42px; letter-spacing: -0.6px; }
.status { display: flex; align-items: center; margin-left: auto; letter-spacing: -0.48px; }
.st-dots { width: 34px; height: 10px; }
.st-clip { width: 18px; height: 32px; margin-left: 35px; }
.st-wifi { width: 34px; height: 26px; margin-left: 37px; }
.st-bt { width: 18px; height: 28px; margin-left: 41px; }
.pct { margin-left: 39px; font-size: 22px; letter-spacing: -0.35px; }
.st-batt { width: 50px; height: 26px; margin-left: 9px; }
.st-cc { width: 28px; height: 26px; margin-left: 37px; }
.date { margin-left: 34px; }
.time { margin-left: 15px; }

/* Browser window */
.window {
  display: flex;
  flex-direction: column;
  height: 1790px;
  overflow: hidden;
  border-radius: 22px;
  box-shadow: 0 0 0 2px #000;
}
.chrome {
  height: 226px;
  border: 2px solid #504f56;
  border-top-color: #6e6d73;
  border-bottom: 2px solid #0b0b0d;
  border-radius: 22px 22px 0 0;
  background: #2b2a33;
  color: #fbfbfe;
}
.tabs {
  display: flex;
  align-items: center;
  gap: 8px;
  height: 86px;
  padding-bottom: 2px;
  border-radius: 20px 20px 0 0;
  background: #1c1b22;
}
.lights { display: flex; gap: 16px; width: 206px; padding-left: 24px; }
.lights i { width: 24px; height: 24px; border-radius: 50%; }
.lights .red { background: #ed6a5e; }
.lights .yellow { background: #f4bf4f; }
.lights .green { background: #61c554; }
.tab {
  display: flex;
  align-items: center;
  width: 442px;
  height: 72px;
  padding: 0 24px 0 16px;
  border-radius: 8px;
  color: #b4b4b8;
  font-size: 22px;
  letter-spacing: -0.1px;
  white-space: nowrap;
}
.tab.active { background: #42414d; color: #fbfbfe; box-shadow: 0 0 6px rgba(0, 0, 0, .5); }
.fav { width: 32px; height: 32px; margin-right: 11px; }
.tab .title { flex: 1; min-width: 0; padding-top: 4px; }
.x { width: 16px; height: 16px; }
.media .title { display: flex; flex-direction: column; padding-top: 2px; }
.fade {
  width: 344px;
  line-height: 25px;
  letter-spacing: 0.1px;
  -webkit-mask-image: linear-gradient(90deg, #000 285px, transparent 338px);
  mask-image: linear-gradient(90deg, #000 285px, transparent 338px);
}
.tab small { font-size: 17px; line-height: 21px; color: #98989d; letter-spacing: -0.07px; }
.plus { width: 24px; height: 24px; margin-left: 23px; }

.toolbar { display: flex; align-items: center; height: 80px; padding-left: 32px; }
.t-back { width: 28px; height: 28px; }
.t-fwd { width: 28px; height: 28px; margin-left: 44px; }
.t-reload { width: 28px; height: 28px; margin-left: 44px; }
.urlbar {
  display: flex;
  align-items: center;
  width: 1886px;
  height: 64px;
  margin-left: 255px;
  padding: 0 16px 0 17px;
  border-radius: 8px;
  background: #1c1b22;
}
.u-shield { width: 30px; height: 32px; }
.u-lock { width: 26px; height: 32px; margin-left: 28px; }
.u-perm { width: 30px; height: 22px; margin-left: 28px; }
.url { flex: 1; margin-left: 21px; padding-top: 2px; color: #8f8f96; font-size: 28px; letter-spacing: -0.3px; white-space: nowrap; }
.url b { font-weight: 400; color: #fbfbfe; }
.u-star { width: 32px; height: 32px; }
.extensions { display: flex; gap: 40px; margin-left: 253px; }
.extensions svg { width: 32px; height: 32px; }
.ic-s { font: 700 20px Inter, sans-serif; fill: #2b2a33; }

.bookmarks { display: flex; align-items: center; gap: 24px; height: 56px; padding-left: 22px; font-size: 22px; font-weight: 500; letter-spacing: -0.1px; white-space: nowrap; }
.bookmarks svg { width: 32px; height: 32px; }
.bookmarks .bm { display: flex; align-items: center; gap: 8px; }
.bm span { padding-top: 1px; }
.bookmarks .bm.last { gap: 12px; letter-spacing: -0.3px; }
.ic-hd { font: 700 18px Inter, sans-serif; fill: #1c1608; }

/* Store page */
.site {
  position: relative;
  flex: 1;
  background: #fff;
  font-family: Lato, "Liberation Sans", sans-serif;
  font-size: 32px;
  line-height: 48px;
  white-space: nowrap;
  -webkit-text-stroke: 0.6px currentColor;
}
.topbar { display: grid; grid-template-columns: 1038px 948px 1fr; height: 243px; }
.logo { display: flex; align-items: flex-start; padding: 60px 0 0 62px; }
.logo svg { width: 80px; height: 80px; -webkit-text-stroke: 0; }
.logo span { margin: -7px 0 0 2px; font-size: 64px; line-height: 76px; color: #000; letter-spacing: 0.5px; -webkit-text-stroke: 1.2px #000; }
.ic-motto { font: italic 5.5px Lato, sans-serif; fill: #a5a5a5; }
.search { display: flex; height: 76px; margin-top: 58px; }
.field { flex: 1; padding: 13px 24px 0; border: 2px solid #000; color: #6c757d; letter-spacing: 0.15px; -webkit-text-stroke: 0.2px #6c757d; }
.go { display: flex; align-items: center; justify-content: center; width: 99px; background: #000; }
.go svg { width: 32px; height: 32px; }
.account { display: flex; justify-content: flex-end; gap: 87px; padding: 50px 61px 0 0; }
.account a { display: flex; flex-direction: column; align-items: center; gap: 4px; color: #000; }
.account svg { width: 37.5px; height: 43px; }
.account .user { color: #4aa0b5; letter-spacing: 0.2px; }
.account .user svg { fill: #000; }

.main-nav { display: flex; gap: 128.5px; padding-left: 860px; font-weight: 700; letter-spacing: 0.6px; -webkit-text-stroke: 0; }
.container { width: 2360px; margin: 60px auto 0; }
.banner { height: 58px; background: #77bddc; color: #fff; font-size: 48px; line-height: 59px; text-align: center; letter-spacing: -0.08px; }
h2 { font-size: 64px; line-height: 77px; font-weight: 400; color: #4aa0b5; letter-spacing: -0.1px; -webkit-text-stroke: 1.1px currentColor; }
.container h2 { margin-top: 48px; }
hr { height: 2px; border: 0; background: #e5e5e5; }
.container hr { margin-top: 48px; }
.empty { margin-top: 32px; font-size: 40px; line-height: 60px; color: #4aa0b5; letter-spacing: -0.33px; -webkit-text-stroke: 0.9px currentColor; }
.btn { display: flex; align-items: center; width: 355px; height: 76px; margin-top: 96px; padding-left: 38px; border: 2px solid #77bddc; color: #77bddc; }
.btn svg { width: 20px; height: 32px; }
.btn span { margin-left: 20px; padding-top: 1px; }

.footer { display: grid; grid-template-columns: 1210px 1fr; height: 285px; margin-top: 32px; padding: 0 332px; background: #e5ecf5; }
.social { padding-top: 46px; }
h3 { font-size: 56px; line-height: 67px; font-weight: 400; color: #4aa0b5; letter-spacing: -0.1px; -webkit-text-stroke: 1px currentColor; }
.keep { margin-top: 16px; color: #6c757d; letter-spacing: -0.19px; }
.fb { display: flex; align-items: center; gap: 6px; margin-top: 32px; color: #3478f6; letter-spacing: -0.12px; }
.fb svg { width: 28px; height: 32px; }
.subscribe { padding-top: 33px; }
.subscribe h2 { margin-bottom: 15px; letter-spacing: 0.5px; }
.subscribe p + p { margin-top: 32px; }
.subscribe p { white-space: pre; }
.lead { color: #6c757d; letter-spacing: -0.27px; }
.subscribe a { color: #3478f6; letter-spacing: -0.02px; }
.subscribe .privacy { letter-spacing: 0.16px; }

.toast {
  position: absolute;
  top: 144px;
  right: 30px;
  width: 700px;
  height: 254px;
  border: 2px solid rgba(0, 0, 0, .1);
  border-top: 0;
  background: #fff;
  background-clip: padding-box;
  box-shadow: 0 8px 24px rgba(0, 0, 0, .1);
  font-size: 28px;
  line-height: 42px;
  white-space: normal;
}
.toast-head { display: flex; align-items: center; justify-content: space-between; height: 78px; padding: 0 26px 0 24px; border-top: 4px solid #4fa551; border-bottom: 2px solid #f0f0f0; color: #343a40; letter-spacing: 0.6px; -webkit-text-stroke: 0; }
.toast-head svg { width: 26px; height: 23px; margin-top: -3px; }
.toast-body { padding: 24px 24px 0; color: #4fa551; letter-spacing: -0.11px; }
.toast-body hr { margin-top: 8px; background: #e2e2e2; }

/* Dock */
.dock {
  position: absolute;
  left: 776px;
  top: 1868px;
  display: flex;
  width: 1472px;
  height: 86px;
  padding: 0 4px;
  border: 2px solid #3b465f;
  border-radius: 24px;
  background: linear-gradient(90deg, #151d2c, #152038 30%, #172450 58%, #1a2656 76%, #14203e 92%, #121c36);
  box-shadow: 0 0 50px rgba(0, 0, 0, .28);
}
.cell { position: relative; display: flex; align-items: center; justify-content: center; width: 68px; padding-bottom: 6px; }
.cell svg { width: 52px; height: 52px; }
.cell .ff { width: 58px; height: 60px; margin-bottom: 2px; }
.cell .sp { width: 54px; height: 54px; }
.cell .big { width: 64px; height: 64px; }
.cell .thumb { width: 60px; height: 60px; }
.cell .trash { width: 46px; height: 60px; }
.cell.on::after { content: ""; position: absolute; bottom: 2px; left: 30px; width: 8px; height: 8px; border-radius: 50%; background: #99a1c0; }
.divider { width: 2px; height: 62px; margin: 10px 15px 0; background: #59648a; }
.petals { mix-blend-mode: multiply; }
.petals ellipse { mix-blend-mode: multiply; opacity: .85; }
.cal-m { font: 600 10.5px Inter, sans-serif; fill: #fff; }
.cal-d { font: 300 32px Inter, sans-serif; fill: #222; }
.adobe { font: 700 29px "Open Sans", sans-serif; letter-spacing: -0.5px; }
.ps { fill: #52a5f8; }
.ai { fill: #f19a38; }
```
